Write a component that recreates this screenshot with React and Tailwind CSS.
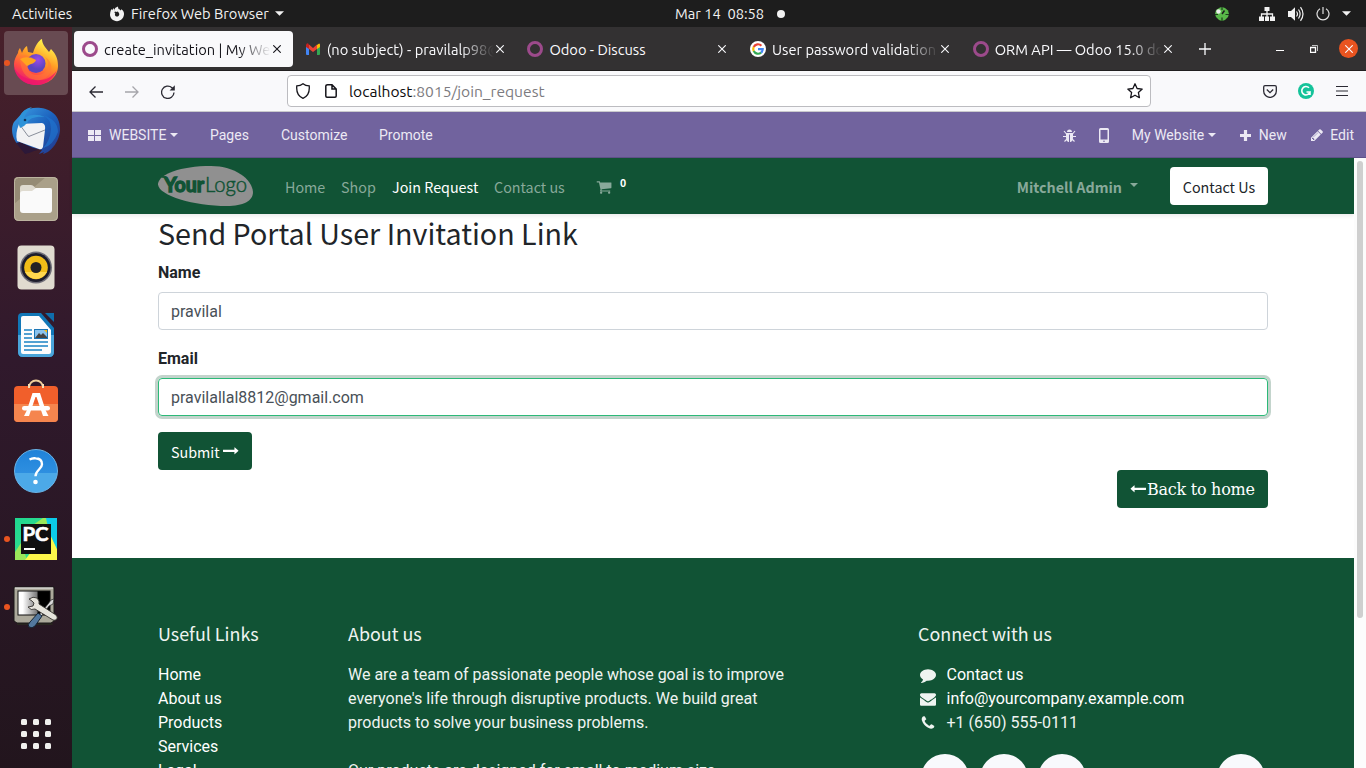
import React from "react";

const PATHS = {
  arrow: "M1728 643q0 14-10 24l-384 354q-16 14-35 6-19-9-19-29v-224h-1248q-14 0-23-9t-9-23v-192q0-14 9-23t23-9h1248v-224q0-21 19-29t35 5l384 350q10 10 10 23z",
  cart: "M704 1536q0 52-38 90t-90 38-90-38-38-90 38-90 90-38 90 38 38 90zm896 0q0 52-38 90t-90 38-90-38-38-90 38-90 90-38 90 38 38 90zm128-1088v512q0 24-16.5 42.5t-40.5 21.5l-1044 122q13 60 13 70 0 16-24 64h920q26 0 45 19t19 45-19 45-45 19h-1024q-26 0-45-19t-19-45q0-11 8-31.5t16-36 21.5-40 15.5-29.5l-177-823h-204q-26 0-45-19t-19-45 19-45 45-19h256q16 0 28.5 6.5t19.5 15.5 13 24.5 8 26 5.5 29.5 4.5 26h1201q26 0 45 19t19 45z",
  pencil: "M491 1536l91-91-235-235-91 91v107h128v128h107zm523-928q0-22-22-22-10 0-17 7l-542 542q-7 7-7 17 0 22 22 22 10 0 17-7l542-542q7-7 7-17zm-54-192l416 416-832 832h-416v-416zm683 96q0 53-37 90l-166 166-416-416 166-165q36-38 90-38 53 0 91 38l235 234q37 39 37 91z",
  phone: "M1600 1240q0 27-10 70.5t-21 68.5q-21 50-122 106-94 51-186 51-27 0-53-3.5t-57.5-12.5-47-14.5-55.5-20.5-49-18q-98-35-175-83-127-79-264-216t-216-264q-48-77-83-175-3-9-18-49t-20.5-55.5-14.5-47-12.5-57.5-3.5-53q0-92 51-186 56-101 106-122 25-11 68.5-21t70.5-10q14 0 21 3 18 6 53 76 11 19 30 54t35 63.5 31 53.5q3 4 17.5 25t21.5 35.5 7 28.5q0 20-28.5 50t-62 55-62 53-28.5 46q0 9 5 22.5t8.5 20.5 14 24 11.5 19q76 137 174 235t235 174q2 1 19 11.5t24 14 20.5 8.5 22.5 5q18 0 46-28.5t53-62 55-62 50-28.5q14 0 28.5 7t35.5 21.5 25 17.5q25 15 53.5 31t63.5 35 54 30q70 35 76 53 3 7 3 21z",
  comment: "M1792 896q0 174-120 321.5t-326 233-450 85.5q-70 0-145-8-198 175-460 242-49 14-114 22-17 2-30.5-9t-17.5-29v-1q-3-4-.5-12t2-10 4.5-9.5l6-9 7-8.5 8-9q7-8 31-34.5t34.5-38 31-39.5 32.5-51 27-59 26-76q-157-89-247.5-220t-90.5-281q0-130 71-248.5t191-204.5 286-136.5 348-50.5 348 50.5 286 136.5 191 204.5 71 248.5z",
  envelope: "M1792 710v794q0 66-47 113t-113 47h-1472q-66 0-113-47t-47-113v-794q44 49 101 87 362 246 497 345 57 42 92.5 65.5t94.5 48 110 24.5h2q51 0 110-24.5t94.5-48 92.5-65.5q170-123 498-345 57-39 100-87zm0-294q0 79-49 151t-122 123q-376 261-468 325-10 7-42.5 31t-54 38.5-52 32.5-57.5 27-50 9h-2q-23 0-50-9t-57.5-27-52-32.5-54-38.5-42.5-31q-91-64-262-182.5t-205-142.5q-62-42-117-115.5t-55-136.5q0-78 41.5-130t118.5-52h1472q65 0 112.5 47t47.5 113z",
};

function Fa({ name, className }) {
  return (
    <svg viewBox="0 0 1792 1792" fill="currentColor" className={`shrink-0 ${className}`}>
      <path d={PATHS[name]} />
    </svg>
  );
}

function Caret({ className = "" }) {
  return (
    <svg viewBox="0 0 10 5" fill="currentColor" className={`shrink-0 ${className}`}>
      <path d="M0 0h10L5 5z" />
    </svg>
  );
}

function TopBar() {
  return (
    <header className="flex h-[27px] shrink-0 items-center bg-[#1d1d1d] text-[14.667px] text-[#f2f2f2]">
      <div className="flex w-[675px] shrink-0 items-center pl-3">
        <span className="w-[97px]">Activities</span>
        <svg viewBox="0 0 16 16" className="mr-[6px] size-4" fill="#f2f2f2">
          <path d="M1.3 6.2 2.2 3l1 1.3L4.5 2l.8 2.2c1 0 1.8.3 2.2.8-1.3.2-2 .8-2 1.6 0 .5.3.8.8 1-.4.5-.5 1-.3 1.6.4 1 1.6 1.6 2.800 1.200 1.600-.6 2-2.400.8-3.900-.9-1-1.100-2.600.3-4.300.3 1 1 1.500 1.700 2.200l.7-1.100c2 1.200 3 3 2.700 5.300-.4 3.800-3.300 6.600-7 6.600-4 0-7-3-7-6.600z" />
          <path d="M5 4q1-3 4-3.500Q8.500 3 11 5L7 6z" />
        </svg>
        <span>Firefox Web Browser</span>
        <Caret className="ml-[6px] h-[5px] w-[9px]" />
      </div>
      <div className="flex flex-1 items-center whitespace-pre">
        <span className="w-[90px]">Mar 14  08:58</span>
        <span className="ml-[12px] size-2 rounded-full bg-[#f2f2f2]" />
      </div>
      <div className="flex items-center pr-[15px]">
        <svg viewBox="0 0 14 14" className="mr-[30px] size-[14px]">
          <path d="M5 .5 7 0l3 1 3 2.500 1 3.500-1 3-3 3-3 1-3-1-3-3-1-3 1-4z" fill="#58b848" />
          <path d="m7 7 2.500-3.500" stroke="#1d1d1d" strokeWidth="1.500" />
          <path d="M7 0v3M7 10.500V14M0 7.500h3M10.500 7.500H14" stroke="#1d3d1d" strokeWidth="1.200" />
          <circle cx="3.500" cy="4.500" r="2.200" fill="#ececec" />
        </svg>
        <svg viewBox="0 0 16 14" className="mr-[13px] h-[14px] w-4" fill="#f2f2f2">
          <path d="M5.500 0h5v4h-5zM0 9.500h5V14H0zM6 9.500h4V14H6zM11 9.500h5V14h-5z" />
          <path d="M8 4v6M2.500 10V7h11v3" fill="none" stroke="#f2f2f2" strokeWidth="1.300" />
        </svg>
        <svg viewBox="0 0 16 16" className="mr-[12px] size-4" fill="none" stroke="#f2f2f2">
          <path d="M0 5h3l4-3.800v13.600L3 11H0z" fill="#f2f2f2" stroke="none" />
          <path d="M8.500 5.500q2 2.500 0 5M10.500 3.500q3.200 4.500 0 9M12.500 1.200q5 6.800 0 13.600" strokeWidth="1.200" />
        </svg>
        <svg viewBox="0 0 14 14" className="mr-[12px] size-[14px]" fill="none" stroke="#e0e0e0" strokeWidth="1.200">
          <path d="M7 0v7M4 1.700a6 6 0 1 0 6 0" />
        </svg>
        <Caret className="h-[5px] w-[9px]" />
      </div>
    </header>
  );
}

function Firefox() {
  return (
    <svg viewBox="0 0 48 48" className="size-12">
      <defs>
        <linearGradient id="ff1" x1="0.800" y1="0" x2="0.300" y2="1">
          <stop offset="0.100" stopColor="#fff04a" />
          <stop offset="0.450" stopColor="#ff9a24" />
          <stop offset="0.750" stopColor="#ff4a45" />
          <stop offset="1" stopColor="#e3157a" />
        </linearGradient>
        <radialGradient id="ff2" cx="0.600" cy="0.300">
          <stop offset="0" stopColor="#9a4be8" />
          <stop offset="1" stopColor="#5a45c0" />
        </radialGradient>
      </defs>
      <path d="M6 14c0-2 1-4 2-5l2 5c1-3 3-6 5-7l1 6 5 1c2-7 6-13 9-14 0 3 1 5 3 8l4 5 2-3c5 5 7 10 7 17C46 38 36 46 24 46S2 37 2 25c0-4 2-8 4-11z" fill="url(#ff1)" />
      <circle cx="24" cy="24.500" r="9.500" fill="url(#ff2)" />
      <path d="M8 18c5-4 11 0 16 3-4 1-7 3-8 6-1 4 3 9 9 9 6 0 11-4 11-10 0-3-1-6-3-8 5 3 7 8 6 13-2 8-9 11-15 10C14 40 8 32 8 18z" fill="#ff7a35" opacity="0.550" />
      <path d="M8 20q7-4 16 1-1 3-5 4l-4 2-3-3z" fill="#ffa51e" />
      <path d="M2 28c1 9 9 18 22 18 11 0 18-7 21-15-6 9-14 11-22 10C12 40 5 35 2 28z" fill="#ed146c" opacity="0.750" />
    </svg>
  );
}

function Thunderbird() {
  return (
    <svg viewBox="0 0 48 48" className="size-12">
      <defs>
        <linearGradient id="tb" x1="0" y1="0" x2="1" y2="1">
          <stop offset="0" stopColor="#3fa4e8" />
          <stop offset="0.500" stopColor="#1c62bd" />
          <stop offset="1" stopColor="#253487" />
        </linearGradient>
      </defs>
      <path d="M12 4C20-2 48-2 48 22c0 11-8 23-17 25l1-2-5 2 3-4-8-2-9 2C2 38-3 24 2 15z" fill="url(#tb)" />
      <path d="M4 36 8 35l18 8-4 1q-4 2-9 3z" fill="#2c1838" />
      <path d="M7 17 30 16q4 1 3 7l-2 17q-1 3-4 2L5 34q-2-7 2-17z" fill="#f2f2f4" />
      <path d="m8 18 8 11q1 1 2 0l15-6" stroke="#7d8290" strokeWidth="0.900" fill="none" />
      <path d="M8 9q3-7 12-9-6 5-8 11 9-6 21-1c-9-1-16 1-18 6q-3 4-7 5l-1-3q-1-5 1-9z" fill="#2e92d8" />
      <circle cx="13" cy="13" r="1.300" fill="#12345b" />
      <path d="M31 8q8 4 8 14-1 12-8 19 10-2 15-16 0-12-15-17z" fill="#1f74cf" opacity="0.700" />
    </svg>
  );
}

function Files() {
  return (
    <svg viewBox="0 0 44 44" className="size-11">
      <rect width="44" height="44" rx="4.500" fill="#aaa089" />
      <path d="M4 0h28L0 27V4q0-4 4-4z" fill="#958b75" />
      <rect x="0.500" y="0.500" width="43" height="43" rx="4" fill="none" stroke="#bcb4a0" />
      <path d="M6 11q0-3 3-3h8q2 0 3 1.500L21.500 11H36q2 0 2 2v5H6z" fill="#dfdbd0" />
      <rect x="6" y="14" width="32" height="22" rx="3" fill="#fafafa" />
      <path d="M22 11h14q2 0 2 2v8H18v-7z" fill="#fafafa" />
    </svg>
  );
}

function Rhythmbox() {
  return (
    <svg viewBox="0 0 38 46" className="mt-[2px] h-[46px] w-[38px]">
      <rect x="0.500" y="0.500" width="37" height="44" rx="4" fill="#e0dbd0" />
      <circle cx="19" cy="22.500" r="16" fill="#6f6e78" />
      <circle cx="19" cy="22.500" r="14.500" fill="#1d1d2c" />
      <circle cx="19" cy="22.500" r="11.800" fill="#f2bd18" />
      <path d="M8 27q4 7 11 7t11-7z" fill="#ffd84e" />
      <circle cx="19" cy="22.500" r="5.500" fill="#222225" />
    </svg>
  );
}

function Writer() {
  return (
    <svg viewBox="0 0 38 46" className="h-[46px] w-[38px]">
      <path d="M5 1h19l13 15v24q0 5-5 5H6q-5 0-5-5V5q0-4 4-4z" fill="#1177b7" />
      <path d="M1 23h36v17q0 5-5 5H6q-5 0-5-5z" fill="#4aa5da" />
      <path d="M28 1h9v9z" fill="#0f6dab" />
      <path d="M6 4h16l12 14v22q0 2-2 2H6q-2 0-2-2V6q0-2 2-2z" fill="#fdfdfd" />
      <path d="M7 18h8M7 22h8M7 26h8M7 30h24M7 34h24M7 38h18" stroke="#1b83c4" strokeWidth="1.700" />
      <rect x="17" y="17" width="14" height="10" fill="#1b75b5" />
      <rect x="18" y="18" width="12" height="8" fill="#8ac3ee" />
      <path d="m18 26 4-5 2 2 2-2 4 4v1z" fill="#444" />
      <path d="M27 18h3v3z" fill="#f5b915" />
    </svg>
  );
}

function Software() {
  return (
    <svg viewBox="0 0 44 44" className="mb-1 size-11">
      <path d="M15 9c0-10 14-10 14 0" fill="none" stroke="#f1cf9b" strokeWidth="2" />
      <rect y="7" width="44" height="36" rx="4" fill="#f15f2b" />
      <path d="M0 25h44v14q0 4-4 4H4q-4 0-4-4z" fill="#f5854e" />
      <path d="M15 5v4M29 5v4" stroke="#f7dfb5" strokeWidth="2" />
      <path d="m18.500 14-5.500 17-3 6h5l6.500-19h1L29 37h5.500l-3-6L26 14z" fill="#fff" />
      <rect x="8" y="27" width="28" height="4.500" rx="2.250" fill="#fff" />
    </svg>
  );
}

function PyCharm() {
  return (
    <svg viewBox="0 0 42 42" className="size-[42px]">
      <defs>
        <linearGradient id="pc" y2="1">
          <stop stopColor="#1fd790" />
          <stop offset="1" stopColor="#3fe08e" />
        </linearGradient>
      </defs>
      <rect width="42" height="42" fill="url(#pc)" />
      <path d="m28 0-10 7L0 34v8h12l-2-6h26l3 6h3V26L32 0z" fill="#9ae75a" />
      <path d="m10 42 6-8h20V18l6 13v11z" fill="#fcf84a" />
      <path d="M31 0h11v31l-8-17z" fill="#0bcbe9" />
      <rect x="6" y="6" width="30" height="30" fill="#101010" />
      <rect x="9" y="30" width="11" height="2" fill="#fff" />
      <text x="7.500" y="23" fill="#fff" className="font-[Lato,sans-serif] text-[19px] font-bold" stroke="#fff" strokeWidth="0.600" textLength="26" lengthAdjust="spacingAndGlyphs">PC</text>
    </svg>
  );
}

function Tweaks() {
  return (
    <svg viewBox="0 0 46 44" className="h-11 w-[46px]">
      <defs>
        <linearGradient id="tw">
          <stop offset="0.150" stopColor="#fff" />
          <stop offset="0.600" stopColor="#777" />
          <stop offset="0.620" stopColor="#000" />
        </linearGradient>
      </defs>
      <path d="M4 36h34l2 4H4z" fill="#28251f" />
      <path d="M1 2h40v34l-3 2H4l-3-2z" fill="#aca99b" stroke="#1b1918" />
      <path d="M2 3h38" stroke="#eee" />
      <rect x="5" y="6" width="32" height="24" fill="url(#tw)" stroke="#111" />
      <path d="m38 15 3-1-1 5-4 2-9 12-2-2 10-12z" fill="#d8d8d8" stroke="#222" strokeWidth="0.700" />
      <path d="m25 28 4 3-7 10q-3 3-6 1-2-2 1-5z" fill="#53789e" stroke="#152434" />
      <path d="M16 14q4-3 8-1 3 3 2 6l17 11q2 2 1 4-2 2-4 1L22 24q-4 2-7-2l5-1 1-3-2-2z" fill="#e6e4dc" stroke="#33312e" strokeWidth="0.900" />
    </svg>
  );
}

function Help() {
  return (
    <div className="flex size-11 items-center justify-center rounded-full border border-[#69b4e8] bg-[linear-gradient(#1f82d9_0%,#2e8fe0_54%,#4ca9e8_55%,#4ca9e8_100%)]">
      <svg viewBox="0 0 16 28" className="h-7 w-4" fill="none" stroke="#fff" strokeWidth="2.400">
        <path d="M1.500 2.500q3-1.500 6-1.300c4.500.2 6.500 3 6.500 6 0 5-6.500 5.800-6.500 12" />
        <circle cx="7.500" cy="25" r="2.300" fill="#fff" stroke="none" />
      </svg>
    </div>
  );
}

const DOCK = [
  { icon: Firefox, running: true, active: true },
  { icon: Thunderbird },
  { icon: Files },
  { icon: Rhythmbox },
  { icon: Writer },
  { icon: Software },
  { icon: Help },
  { icon: PyCharm, running: true },
  { icon: Tweaks, running: true },
];

function Dock() {
  return (
    <aside className="flex w-[72px] shrink-0 flex-col gap-1 bg-linear-to-b from-[#48202a] via-[#30192c] via-45% to-[#22151d] px-1 pt-1 pb-0">
      {DOCK.map(({ icon: Icon, running, active }, i) => (
        <div key={i} className={`relative flex h-16 w-16 items-center justify-center rounded ${active ? "bg-[#684b52]" : ""}`}>
          {running && <span className="absolute top-[29px] left-0 size-[6px] rounded-full bg-[#e95420]" />}
          <Icon />
        </div>
      ))}
      <div className="mt-auto mb-[19px] ml-[17px] grid w-[30px] grid-cols-3 gap-[6px]">
        {Array.from({ length: 9 }, (_, i) => (
          <span key={i} className="size-[6px] rounded-[1.5px] bg-[#f0f0ee]" />
        ))}
      </div>
    </aside>
  );
}

function OdooRing() {
  return <span className="size-4 shrink-0 rounded-full border-[3px] border-[#9c4a8b]" />;
}

function Gmail() {
  return (
    <svg viewBox="0 0 16 12" className="h-3 w-4 shrink-0">
      <path d="M1 2h3v10H2q-1 0-1-1z" fill="#4285f4" />
      <path d="M12 2h3v9q0 1-1 1h-2z" fill="#34a853" />
      <path d="M12 2q3-3 3 0v2l-3 2z" fill="#fbbc04" />
      <path d="M4 1.500 8 5l4-3.500V6L8 9 4 6z" fill="#ea4335" />
      <path d="M1 2q1-3 3-.5V6L1 4z" fill="#c5221f" />
    </svg>
  );
}

function Google() {
  return (
    <svg viewBox="0 0 16 16" className="size-4 shrink-0">
      <circle cx="8" cy="8" r="8" fill="#fff" />
      <g fill="none" strokeWidth="2.200">
        <path d="M11.400 4.700A4.800 4.800 0 0 0 3.700 5.900" stroke="#ea4335" />
        <path d="M3.700 5.900a4.800 4.800 0 0 0 0 4.200" stroke="#fbbc05" />
        <path d="M3.700 10.100a4.800 4.800 0 0 0 7.400 1.500" stroke="#34a853" />
        <path d="M11.100 11.600a4.700 4.700 0 0 0 1.600-3.400H8" stroke="#4285f4" />
      </g>
    </svg>
  );
}

function Cross({ className = "" }) {
  return (
    <svg viewBox="0 0 8 8" className={`size-2 shrink-0 ${className}`} stroke="currentColor" strokeWidth="1.100">
      <path d="m.3.3 7.400 7.400M7.700.3.3 7.700" />
    </svg>
  );
}

const TABS = [
  { icon: OdooRing, label: "create_invitation | My Website", active: true, fade: true },
  { icon: Gmail, label: "(no subject) - pravilalp98@gmail.com", fade: true },
  { icon: OdooRing, label: "Odoo - Discuss" },
  { icon: Google, label: "User password validation in odoo", fade: true },
  { icon: OdooRing, label: "ORM API — Odoo 15.0 documentation", fade: true },
];

function TabStrip() {
  return (
    <div className="flex h-11 shrink-0 items-center border-b border-[#211f20] bg-[#333132] pr-2 pl-[2px] text-[#fbfbfe]">
      {TABS.map(({ icon: Icon, label, active, fade }) => (
        <div key={label} className="w-[222.700px] shrink-0">
          <div className={`flex h-9 w-[219px] items-center rounded pl-2 ${active ? "bg-[#f9f9fb] text-[#15141a]" : ""}`}>
            <Icon />
            <span className={`mt-[2px] ml-[6px] w-[167px] overflow-hidden text-[14.667px] whitespace-nowrap ${fade ? "mask-r-from-80% mask-r-to-100%" : ""}`}>{label}</span>
            <Cross className="ml-[2px]" />
          </div>
        </div>
      ))}
      <svg viewBox="0 0 12 12" className="ml-[12px] size-3" stroke="currentColor" strokeWidth="1.300">
        <path d="M6 0v12M0 6h12" />
      </svg>
      <span className="mt-1 ml-auto h-px w-2 bg-white" />
      <svg viewBox="0 0 8 8" className="mr-[21px] ml-[26px] size-2" fill="none" stroke="#fff">
        <path d="M.5 2.500h5v5h-5z" strokeWidth="1.300" />
        <path d="M2 .5h5.500V6" opacity="0.700" />
      </svg>
      <span className="flex size-[19px] items-center justify-center rounded-full bg-[#e95420]">
        <Cross />
      </span>
    </div>
  );
}

function AddressBar() {
  return (
    <div className="flex h-[41px] shrink-0 items-center border-b border-[#c9c9cc] bg-[#f9f9fb] pr-[17px] pl-[17px] text-[#2b2a33]">
      <svg viewBox="0 0 14 12" className="mt-px h-3 w-[14px]" fill="none" stroke="currentColor" strokeWidth="1.300">
        <path d="M14 6H1M6.500.5 1 6l5.500 5.500" />
      </svg>
      <svg viewBox="0 0 14 12" className="mt-px ml-[22px] h-3 w-[14px] opacity-40" fill="none" stroke="currentColor" strokeWidth="1.300">
        <path d="M0 6h13M7.500.5 13 6l-5.500 5.500" />
      </svg>
      <svg viewBox="0 0 14 14" className="ml-[22px] mt-px size-[14px]" fill="none" stroke="currentColor" strokeWidth="1.300">
        <path d="M13 7.500A6.200 6.200 0 1 1 11 2.700l1.500 1.500" />
        <path d="M13.800.3v5.200H8.600z" fill="currentColor" stroke="none" />
      </svg>
      <div className="ml-[112px] flex h-8 w-[864px] items-center rounded border border-[#bcbcc0] bg-white px-[8px] text-[#15141a]">
        <svg viewBox="0 0 14 16" className="h-4 w-[14px]" fill="none" stroke="currentColor" strokeWidth="1.300">
          <path d="M7 .7q2.500 2 6.200 2.200C13.800 9 11.500 13.500 7 15.300 2.500 13.500.2 9 .8 2.900 4.500 2.700 7 .7 7 .7z" />
        </svg>
        <svg viewBox="0 0 12 14" className="ml-[15px] h-[14px] w-3" fill="none" stroke="currentColor" strokeWidth="1.500">
          <path d="M2.500.8H7l4.200 4.200v7q0 1.200-1.200 1.200H2Q.8 13.200.8 12V2Q.8.8 2.500.8zM7 .8V5h4.200" />
        </svg>
        <span className="mt-px ml-3 text-[15.600px] text-[#7c7b80]">
          <span className="text-[#0c0c0d]">localhost</span>:8015/join_request
        </span>
        <svg viewBox="0 0 16 16" className="mr-[-1px] ml-auto size-4" fill="none" stroke="currentColor" strokeWidth="1.300" strokeLinejoin="round">
          <path d="m8 .8 2.100 4.700 5.100.6-3.800 3.500 1 5.100L8 12.200l-4.400 2.500 1-5.100L.8 6.100l5.100-.6z" />
        </svg>
      </div>
      <svg viewBox="0 0 14 13" className="ml-[112px] h-[13px] w-[14px]" fill="none" stroke="currentColor" strokeWidth="1.300">
        <path d="M2 .7h10q1.300 0 1.300 1.300v4.200a6.300 6.200 0 0 1-12.600 0V2Q.7.7 2 .7zM3.800 4.500 7 7.600l3.200-3.100" />
      </svg>
      <svg viewBox="0 0 16 16" className="ml-[21px] size-4">
        <circle cx="8" cy="8" r="8" fill="#15c39a" />
        <path d="M11 4.800A4.200 4.200 0 1 0 12 9H8.500M12 8.500v3.500" fill="none" stroke="#fff" strokeWidth="1.600" />
      </svg>
      <svg viewBox="0 0 12 10" className="ml-[22px] h-[10px] w-3" stroke="currentColor" strokeWidth="1">
        <path d="M0 .5h12M0 5h12M0 9.500h12" />
      </svg>
    </div>
  );
}

function EditorBar() {
  return (
    <div className="flex h-[46px] shrink-0 items-center border-b border-[#5f5189] bg-[#71639e] pt-px pl-4 font-[Roboto,sans-serif] text-[14px] text-[#ece9f4]">
      <svg viewBox="0 0 13 11" className="h-[11px] w-[13px]" fill="currentColor">
        <path d="M0 0h6v5H0zM7 0h6v5H7zM0 6h6v5H0zM7 6h6v5H7z" />
      </svg>
      <span className="ml-[8px] w-[61px]">WEBSITE</span>
      <Caret className="h-1 w-2" />
      <span className="ml-[32px] w-[71px]">Pages</span>
      <span className="w-[98px]">Customize</span>
      <span>Promote</span>
      <svg viewBox="0 0 13 13" className="ml-auto size-[13px]" fill="currentColor">
        <path d="M4 3a2.500 2.500 0 0 1 5 0zM3 4h7v5q0 3-2.500 4H7V5.500H6V13h-.5Q3 12 3 9z" />
        <path d="m1 2 2.500 3M12 2 9.500 5M0 7.500h4M9 7.500h4M1.500 12.500 4 10M11.500 12.500 9 10" stroke="currentColor" strokeWidth="1.100" />
      </svg>
      <svg viewBox="0 0 10 15" className="ml-[23px] h-[15px] w-[10px]" fill="currentColor" fillRule="evenodd">
        <path d="M1.500 0h7Q10 0 10 1.500v12Q10 15 8.500 15h-7Q0 15 0 13.500v-12Q0 0 1.500 0zm0 2v9.500h7V2zM5 12.500a.8.8 0 1 0 0 1.600.8.8 0 0 0 0-1.600z" />
      </svg>
      <span className="ml-[23px] w-[76px]">My Website</span>
      <Caret className="h-1 w-2" />
      <svg viewBox="0 0 11 11" className="ml-[24px] size-[11px]" fill="currentColor">
        <path d="M3.900 0h3.200v3.900H11v3.200H7.100V11H3.900V7.100H0V3.900h3.900z" />
      </svg>
      <span className="ml-[8px]">New</span>
      <Fa name="pencil" className="ml-[23px] size-[14px]" />
      <span className="mr-3 ml-[6.500px]">Edit</span>
    </div>
  );
}

function Logo() {
  return (
    <svg viewBox="0 0 95 40" className="h-10 w-[95px]">
      <path d="M0 17.500C2 8 22 0 53 0c24 0 41 13 42 26 0 9-10 14-26 14C35 40-1 29 0 17.500z" fill="#909090" />
      <text x="6" y="25.500" fill="#115335" stroke="#115335" strokeWidth="1.400" className="font-[Lato,sans-serif] text-[20px] font-bold" textLength="40" lengthAdjust="spacingAndGlyphs">Your</text>
      <text x="47" y="25.500" fill="#115335" stroke="#115335" strokeWidth="0.500" className="font-[Lato,sans-serif] text-[21px] font-light" textLength="42" lengthAdjust="spacingAndGlyphs">Logo</text>
      <path d="M4 11h4" stroke="#115335" strokeWidth="1.500" />
    </svg>
  );
}

function SiteNav() {
  return (
    <nav className="flex h-14 shrink-0 items-center bg-[#115335] px-[86px] text-[14.320px] text-[#88a99a] shadow-[0_2px_4px_rgba(0,0,0,0.08)]">
      <Logo />
      <div className="ml-8 flex items-center">
        <span className="w-[56px] pt-px">Home</span>
        <span className="w-[51px] pt-px">Shop</span>
        <span className="w-[102px] pt-px text-white">Join Request</span>
        <span className="w-[102px] pt-px">Contact us</span>
        <Fa name="cart" className="mt-px size-4" />
        <span className="mb-[7px] ml-2 text-[10.500px] font-bold text-white">0</span>
      </div>
      <div className="ml-auto flex items-center">
        <span className="pt-px font-bold">Mitchell Admin</span>
        <Caret className="mt-[-2px] ml-[8px] h-1 w-2" />
        <span className="ml-8 flex h-[38px] w-[98px] items-center justify-center rounded bg-white pt-px text-[#212529]">Contact Us</span>
      </div>
    </nav>
  );
}

function Form() {
  return (
    <main className="flex h-[344px] shrink-0 flex-col px-[86px] font-[Roboto,sans-serif] text-base text-[#212529]">
      <h1 className="h-[47px] shrink-0 font-['Noto_Sans_CJK_SC',sans-serif] text-[28.660px] leading-[38px]">Send Portal User Invitation Link</h1>
      <label className="h-[31px] leading-6 font-bold">Name</label>
      <div className="flex h-[38px] shrink-0 items-center rounded border border-[#ced4da] px-3 pt-[2px] text-[#495057]">pravilal</div>
      <label className="mt-[17px] h-[31px] leading-6 font-bold">Email</label>
      <div className="flex h-[38px] shrink-0 items-center rounded border border-[#2cb978] px-3 pt-[2px] text-[#495057] shadow-[0_0_0_3px_#c3d4cc]">pravilallal8812@gmail.com</div>
      <button className="mt-4 flex h-[38px] w-[94px] shrink-0 items-center rounded bg-[#115335] pt-px pl-[13px] font-['Noto_Sans_CJK_SC',sans-serif] text-[14.320px] text-white">
        Submit
        <Fa name="arrow" className="mt-[2px] ml-[3px] size-4" />
      </button>
      <button className="flex h-[38px] w-[151px] shrink-0 items-center self-end rounded bg-[#115335] pt-px pl-[13px] text-white">
        <Fa name="arrow" className="mt-[2px] size-4 -scale-x-100" />
        <span className="ml-px font-['DejaVu_Serif',serif] tracking-[-0.260px] whitespace-nowrap">Back to home</span>
      </button>
    </main>
  );
}

function FooterHeading({ children }) {
  return <h2 className="mb-[18px] h-6 font-['Noto_Sans_CJK_SC',sans-serif] text-[17.900px] leading-6">{children}</h2>;
}

function Footer() {
  return (
    <footer className="flex flex-1 items-start overflow-hidden bg-[#115335] px-[86px] pt-[63px] font-[Roboto,sans-serif] text-base leading-6 text-[#eff4f1]">
      <div className="w-[190px] shrink-0">
        <FooterHeading>Useful Links</FooterHeading>
        <ul className="text-white">
          <li>Home</li>
          <li>About us</li>
          <li>Products</li>
          <li>Services</li>
          <li>Legal</li>
        </ul>
      </div>
      <div className="w-[570px] shrink-0">
        <FooterHeading>About us</FooterHeading>
        <p className="mb-6 w-[445px]">We are a team of passionate people whose goal is to improve everyone's life through disruptive products. We build great products to solve your business problems.</p>
        <p className="w-[445px]">Our products are designed for small to medium size</p>
      </div>
      <div className="w-[350px] shrink-0">
        <FooterHeading>Connect with us</FooterHeading>
        <ul>
          <li className="flex items-center"><Fa name="comment" className="mr-[10.500px] ml-[2px] size-4" /><span className="text-white">Contact us</span></li>
          <li className="flex items-center"><Fa name="envelope" className="mr-[10.500px] ml-[2px] size-4" /><span className="text-white">info@yourcompany.example.com</span></li>
          <li className="flex items-center"><Fa name="phone" className="mr-[10.500px] ml-[2px] size-4" /><span>+1 (650) 555-0111</span></li>
        </ul>
        <div className="mt-[19px] flex pl-[3px]">
          <span className="mr-[10.500px] size-12 rounded-full bg-[#f8f9fc]" />
          <span className="mr-[10.500px] size-12 rounded-full bg-[#f8f9fc]" />
          <span className="size-12 rounded-full bg-[#f8f9fc]" />
          <span className="mr-[3px] ml-auto size-12 rounded-full bg-[#f8f9fc]" />
        </div>
      </div>
    </footer>
  );
}

export default function App() {
  return (
    <div className="flex h-[768px] w-[1366px] flex-col overflow-hidden font-['Ubuntu','Noto_Sans',sans-serif]">
      <TopBar />
      <div className="flex min-h-0 flex-1">
        <Dock />
        <div className="flex min-w-0 flex-1 flex-col">
          <TabStrip />
          <AddressBar />
          <EditorBar />
          <div className="flex min-h-0 flex-1 bg-white">
            <div className="flex w-[1282px] flex-col font-['Noto_Sans_CJK_SC',sans-serif]">
              <SiteNav />
              <Form />
              <Footer />
            </div>
            <div className="flex flex-1 justify-center bg-[#fcfcfc] pt-[3px]">
              <div className="h-[457px] w-[6px] rounded-full bg-[#cfcfcf]" />
            </div>
          </div>
        </div>
      </div>
    </div>
  );
}
